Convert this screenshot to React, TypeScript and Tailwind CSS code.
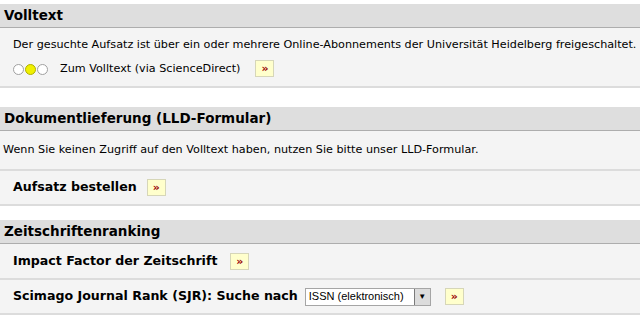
import React from 'react';

function Go() {
  return (
    <span className="inline-flex h-[17px] w-[19px] items-center justify-center border border-[#d6d6b8] bg-[#ffffcc] text-[11px] font-bold leading-none text-[#990000]">
      »
    </span>
  );
}

function Header({ title }: { title: string }) {
  return (
    <div className="flex h-[24px] items-center border-b border-[#adadad] bg-[#dedede] px-[4px] text-[13.5px] font-bold text-black">
      {title}
    </div>
  );
}

export default function App() {
  return (
    <div className="h-[317px] w-[640px] overflow-hidden bg-white font-['Verdana','DejaVu_Sans',sans-serif] text-[11.2px] text-black">
      {/* Volltext */}
      <div className="mt-[4px]">
        <Header title="Volltext" />
        <div className="border-b-2 border-[#dcdcdc] bg-[#f4f4f4] pl-[13px] pt-[10px] pb-[8px]">
          <div className="h-[14px] whitespace-nowrap leading-[14px]">
            Der gesuchte Aufsatz ist über ein oder mehrere Online-Abonnements der Universität Heidelberg freigeschaltet.
          </div>
          <div className="mt-[8px] flex h-[18px] items-center">
            <span className="flex gap-[1px]">
              <span className="h-[11px] w-[11px] rounded-full border border-[#a0a0a0] bg-white" />
              <span className="h-[11px] w-[11px] rounded-full border border-[#b0b000] bg-[#f0f000]" />
              <span className="h-[11px] w-[11px] rounded-full border border-[#a0a0a0] bg-white" />
            </span>
            <span className="ml-[12px]">Zum Volltext (via ScienceDirect)</span>
            <span className="ml-[15px]">
              <Go />
            </span>
          </div>
        </div>
      </div>

      {/* Dokumentlieferung */}
      <div className="mt-[19px]">
        <Header title="Dokumentlieferung (LLD-Formular)" />
        <div className="bg-[#f4f4f4]">
          <div className="flex h-[40px] items-center border-b-2 border-[#dcdcdc] px-[3px]">
            Wenn Sie keinen Zugriff auf den Volltext haben, nutzen Sie bitte unser LLD-Formular.
          </div>
          <div className="flex h-[35px] items-center border-b-2 border-[#dcdcdc] px-[13px] text-[12.6px] font-bold">
            Aufsatz bestellen
            <span className="ml-[10px]">
              <Go />
            </span>
          </div>
        </div>
      </div>

      {/* Zeitschriftenranking */}
      <div className="mt-[14px]">
        <Header title="Zeitschriftenranking" />
        <div className="bg-[#f4f4f4]">
          <div className="flex h-[36px] items-center border-b-2 border-[#dcdcdc] px-[13px] text-[12.6px] font-bold">
            Impact Factor der Zeitschrift
            <span className="ml-[13px]">
              <Go />
            </span>
          </div>
          <div className="flex h-[35px] items-center border-b-2 border-[#dcdcdc] px-[13px] text-[12.6px] font-bold">
            Scimago Journal Rank (SJR): Suche nach
            <span className="ml-[7px] flex h-[18px] w-[126px] items-center border border-[#a5a5a5] bg-white font-['Tahoma','Liberation_Sans',sans-serif] text-[11px] font-normal">
              <span className="flex-1 pl-[3px]">ISSN (elektronisch)</span>
              <span className="flex h-[16px] w-[16px] items-center justify-center border-l border-[#7a7a7a] bg-[#dcdcdc] text-[8px] leading-none">
                ▼
              </span>
            </span>
            <span className="ml-[14px]">
              <Go />
            </span>
          </div>
        </div>
      </div>
    </div>
  );
}
